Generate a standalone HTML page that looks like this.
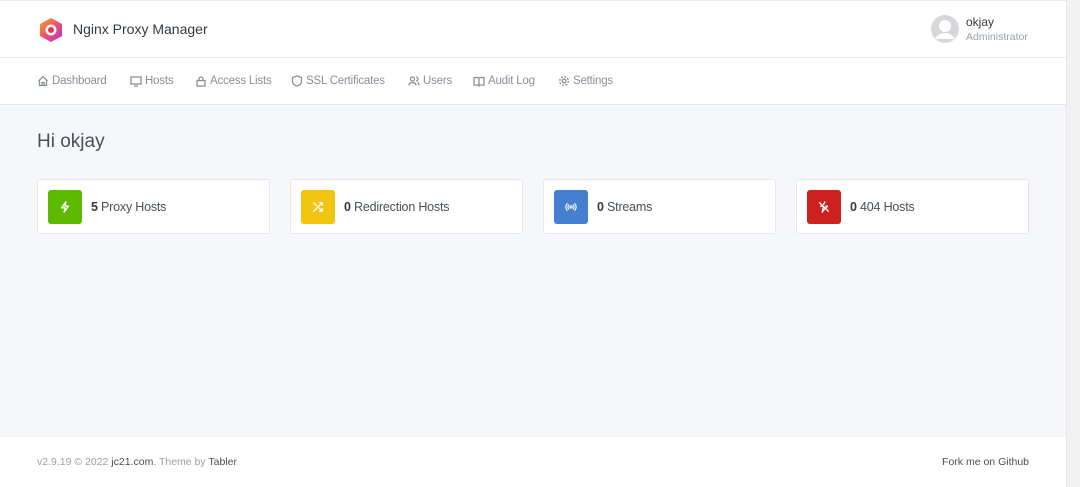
<!DOCTYPE html>
<html><head><style>
*{margin:0;padding:0;box-sizing:border-box}
body{width:1080px;height:487px;overflow:hidden;background:#f5f7fb;font-family:"Liberation Sans",sans-serif;color:#495057;position:relative}
.hdr{position:absolute;left:0;top:0;width:1066px;height:58px;background:#fff;border-bottom:1px solid #e9ecef;border-top:1px solid #e9ecef}
.nav{position:absolute;left:0;top:58px;width:1066px;height:47px;background:#fff;border-bottom:1px solid #e5e7eb}
.nav span{position:absolute;top:17px;font-size:11.5px;letter-spacing:-.2px;color:#8a9099;display:flex;align-items:center;gap:3px}
.nav svg{width:12px;height:12px;fill:none;stroke:#8a9099;stroke-width:1.3}
.sb{position:absolute;right:0;top:0;width:14px;height:487px;background:#f1f1f1;border-left:1px solid #e6e6e6}
h1{position:absolute;left:37px;top:131px;font-size:19px;font-weight:normal;color:#495057}
.card{position:absolute;top:179px;width:233px;height:55px;background:#fff;border:1px solid #e6e8ec;border-radius:3px}
.ic{position:absolute;left:10px;top:10px;width:34px;height:34px;border-radius:3px;display:flex;align-items:center;justify-content:center}
.ic svg{width:12px;height:12px;fill:none;stroke:#fff;stroke-width:1.6;stroke-linecap:round;stroke-linejoin:round}
.card .t{position:absolute;left:53px;top:20px;font-size:12.5px;letter-spacing:-.2px;color:#495057}
.card b{color:#343a40}
.ft{position:absolute;left:0;top:437px;width:1066px;height:50px;background:#fff;font-size:10.5px;color:#9aa0ac}
</style></head><body>
<div class="hdr">
<svg style="position:absolute;left:39px;top:16px" width="24" height="26" viewBox="0 0 24 26"><defs><linearGradient id="g" x1="0" y1="0" x2="1" y2="1"><stop offset="0" stop-color="#f5a623"/><stop offset=".5" stop-color="#f0506e"/><stop offset="1" stop-color="#b02fd0"/></linearGradient></defs><polygon points="12,1 23,7 23,19 12,25 1,19 1,7" fill="url(#g)"/><circle cx="12" cy="13" r="5.5" fill="#fff"/><circle cx="12" cy="13" r="3" fill="#e8304f"/></svg>
<div style="position:absolute;left:73px;top:20px;font-size:14px;color:#343a40">Nginx Proxy Manager</div>
<svg style="position:absolute;left:931px;top:14px" width="28" height="28" viewBox="0 0 28 28"><circle cx="14" cy="14" r="14" fill="#d5d7da"/><circle cx="14" cy="11" r="6" fill="#fff"/><path d="M4 24c3-5 7-6 10-6s7 1 10 6" fill="#fff"/></svg>
<div style="position:absolute;left:966px;top:14px;font-size:12px;color:#343a40">okjay</div>
<div style="position:absolute;left:966px;top:30px;font-size:10.5px;color:#9aa0ac">Administrator</div>
</div>
<div class="nav">
<span style="left:37px"><svg viewBox="0 0 12 12"><path d="M1.5 6L6 1.5 10.5 6M2.5 5v5.5h7V5M5 10.5V7.5h2v3"/></svg>Dashboard</span>
<span style="left:130px"><svg viewBox="0 0 12 12"><rect x="1" y="2" width="10" height="7"/><path d="M4 11h4"/></svg>Hosts</span>
<span style="left:195px"><svg viewBox="0 0 12 12"><rect x="2" y="5.5" width="8" height="5.5"/><path d="M4 5.5V4a2 2 0 0 1 4 0v1.5"/></svg>Access Lists</span>
<span style="left:291px"><svg viewBox="0 0 12 12"><path d="M6 1l4.5 1.5v3.5c0 3-2.5 4.5-4.5 5-2-.5-4.5-2-4.5-5V2.5z"/></svg>SSL Certificates</span>
<span style="left:408px"><svg viewBox="0 0 12 12"><circle cx="4.5" cy="4" r="2"/><path d="M1 10.5c0-2 1.5-3 3.5-3s3.5 1 3.5 3M8 2a2 2 0 0 1 0 4M9.5 7.5c1 .5 1.5 1.5 1.5 3"/></svg>Users</span>
<span style="left:473px"><svg viewBox="0 0 12 12"><path d="M1 2.5h4l1 1 1-1h4V10H7l-1 1-1-1H1zM6 3.5V11"/></svg>Audit Log</span>
<span style="left:558px"><svg viewBox="0 0 12 12"><circle cx="6" cy="6" r="1.8"/><circle cx="6" cy="6" r="4.3" stroke-dasharray="2 1.4"/></svg>Settings</span>
</div>
<h1>Hi okjay</h1>
<div class="card" style="left:37px"><div class="ic" style="background:#5eba00"><svg viewBox="0 0 14 14"><path d="M8 1L3 8h4l-1 5 5-7H7z"/></svg></div><div class="t"><b>5</b> Proxy Hosts</div></div>
<div class="card" style="left:290px"><div class="ic" style="background:#f1c40f"><svg viewBox="0 0 14 14"><path d="M9 2h3v3M2 12L12 2M12 9v3H9M8.5 8.5L12 12M2 2l3.5 3.5"/></svg></div><div class="t"><b>0</b> Redirection Hosts</div></div>
<div class="card" style="left:543px"><div class="ic" style="background:#467fcf"><svg viewBox="0 0 14 14" style="stroke-width:1.3"><circle cx="7" cy="7" r="1.2"/><path d="M4.5 4.5a3.5 3.5 0 0 0 0 5M9.5 4.5a3.5 3.5 0 0 1 0 5M2.5 3a6 6 0 0 0 0 8M11.5 3a6 6 0 0 1 0 8"/></svg></div><div class="t"><b>0</b> Streams</div></div>
<div class="card" style="left:796px"><div class="ic" style="background:#cd201f"><svg viewBox="0 0 14 14"><path d="M2 2l10 10M8 1L6.5 4M9 6h2l-1.5 2M5 6H3l1 0M6 8l-1 5 2.5-3.5"/></svg></div><div class="t"><b>0</b> 404 Hosts</div></div>
<div class="ft">
<div style="position:absolute;left:37px;top:19px">v2.9.19 © 2022 <span style="color:#495057">jc21.com</span>. Theme by <span style="color:#495057">Tabler</span></div>
<div style="position:absolute;right:37px;top:19px;color:#495057">Fork me on Github</div>
</div>
<div class="sb"></div>
</body></html>
